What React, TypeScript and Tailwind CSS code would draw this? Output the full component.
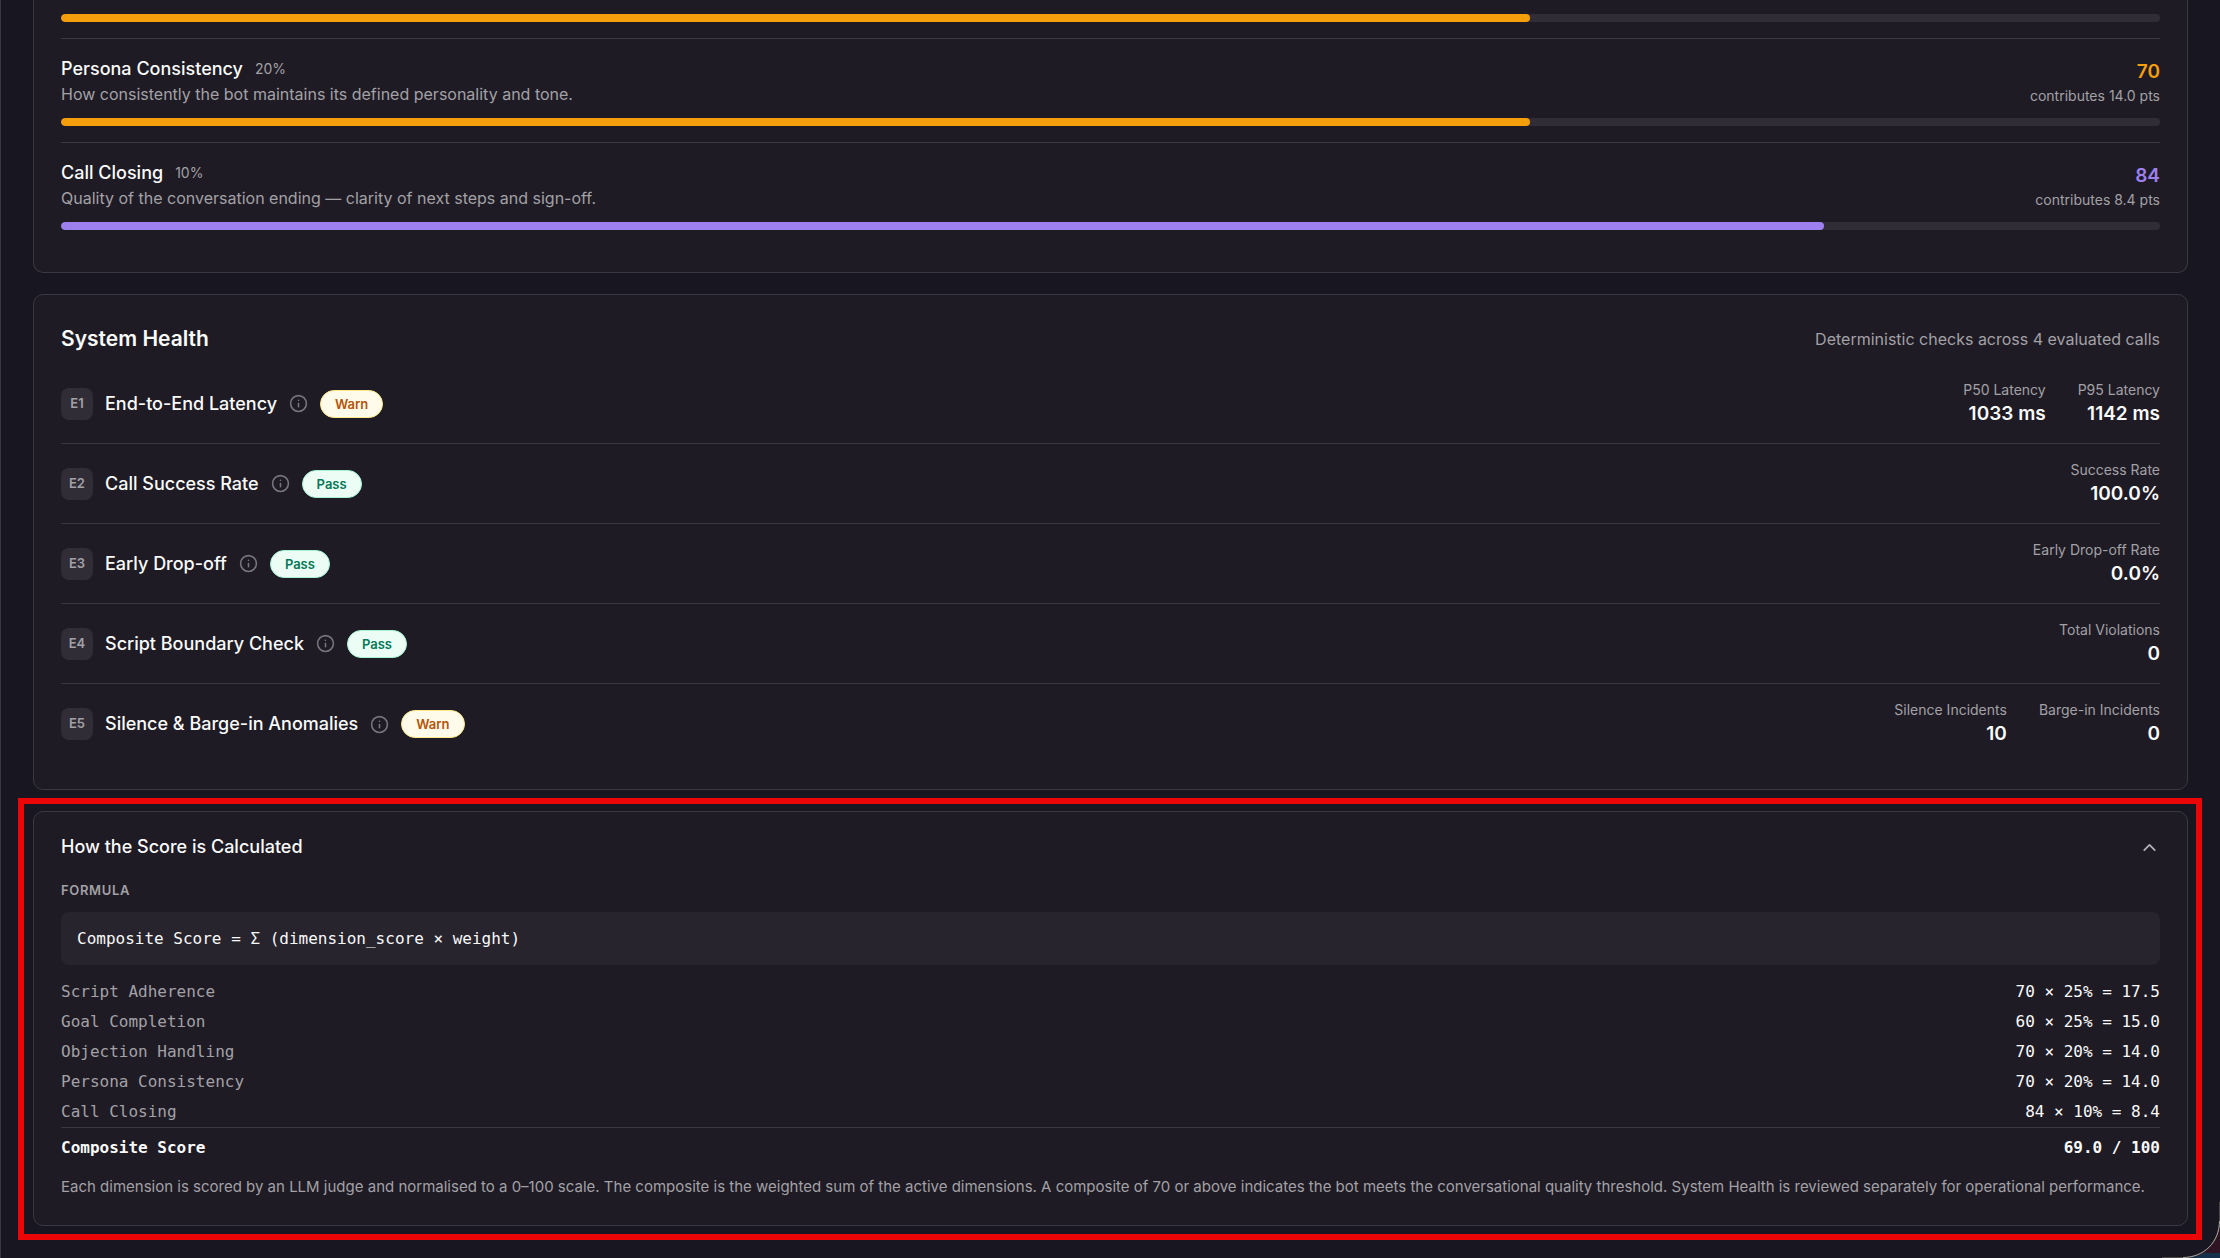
import React from "react";
import { ChevronUp, Info } from "lucide-react";
import clsx from "clsx";

interface Dimension {
  title: string;
  weight: string;
  description: string;
  score: number;
  points: string;
}

interface Check {
  id: string;
  title: string;
  status: "Warn" | "Pass";
  metrics: { label: string; value: string }[];
}

const dimensions: Dimension[] = [
  {
    title: "Persona Consistency",
    weight: "20%",
    description:
      "How consistently the bot maintains its defined personality and tone.",
    score: 70,
    points: "14.0",
  },
  {
    title: "Call Closing",
    weight: "10%",
    description:
      "Quality of the conversation ending — clarity of next steps and sign-off.",
    score: 84,
    points: "8.4",
  },
];

const checks: Check[] = [
  {
    id: "E1",
    title: "End-to-End Latency",
    status: "Warn",
    metrics: [
      { label: "P50 Latency", value: "1033 ms" },
      { label: "P95 Latency", value: "1142 ms" },
    ],
  },
  {
    id: "E2",
    title: "Call Success Rate",
    status: "Pass",
    metrics: [{ label: "Success Rate", value: "100.0%" }],
  },
  {
    id: "E3",
    title: "Early Drop-off",
    status: "Pass",
    metrics: [{ label: "Early Drop-off Rate", value: "0.0%" }],
  },
  {
    id: "E4",
    title: "Script Boundary Check",
    status: "Pass",
    metrics: [{ label: "Total Violations", value: "0" }],
  },
  {
    id: "E5",
    title: "Silence & Barge-in Anomalies",
    status: "Warn",
    metrics: [
      { label: "Silence Incidents", value: "10" },
      { label: "Barge-in Incidents", value: "0" },
    ],
  },
];

const breakdown = [
  { name: "Script Adherence", value: "70 × 25% = 17.5" },
  { name: "Goal Completion", value: "60 × 25% = 15.0" },
  { name: "Objection Handling", value: "70 × 20% = 14.0" },
  { name: "Persona Consistency", value: "70 × 20% = 14.0" },
  { name: "Call Closing", value: "84 × 10% = 8.4" },
];

const ScoreBar = ({ score }: { score: number }) => (
  <div className="h-2 overflow-hidden rounded-full bg-[#302d37]">
    <div
      className={clsx(
        "h-full rounded-full",
        score >= 80 ? "bg-[#9d80ee]" : "bg-[#f59e0b]"
      )}
      style={{ width: `${score}%` }}
    />
  </div>
);

const DimensionRow = ({ dimension }: { dimension: Dimension }) => {
  const { title, weight, description, score, points } = dimension;

  return (
    <div className="border-t border-[#3a3842] pt-4 pb-4">
      <div className="flex items-end justify-between pb-3">
        <div>
          <div className="flex items-center gap-3">
            <h3 className="text-lg leading-7 font-medium text-[#fafafa]">
              {title}
            </h3>
            <span className="text-sm leading-6 text-[#a3a1a6]">{weight}</span>
          </div>
          <p className="text-base leading-[23px] text-[#a3a1a6]">
            {description}
          </p>
        </div>
        <div className="text-right">
          <p
            className={clsx(
              "text-[19px] leading-7 font-semibold",
              score >= 80 ? "text-[#9d80ee]" : "text-[#f59e0b]"
            )}
          >
            {score}
          </p>
          <p className="text-sm leading-5 text-[#a3a1a6]">
            contributes {points} pts
          </p>
        </div>
      </div>
      <ScoreBar score={score} />
    </div>
  );
};

const StatusBadge = ({ status }: { status: Check["status"] }) => (
  <span
    className={clsx(
      "rounded-full border px-3.5 text-[13px] leading-[26px] font-semibold",
      status === "Warn"
        ? "border-[#fde68a] bg-[#fffbeb] text-[#b45309]"
        : "border-[#a7f3d0] bg-[#ecfdf5] text-[#047857]"
    )}
  >
    {status}
  </span>
);

const CheckRow = ({ check }: { check: Check }) => (
  <li className="flex h-20 items-center justify-between border-b border-[#3a3842] last:border-b-0">
    <div className="flex items-center gap-3">
      <span className="flex size-8 items-center justify-center rounded-lg bg-[#302d37] text-[13px] font-semibold text-[#a3a1a6]">
        {check.id}
      </span>
      <h3 className="text-lg leading-7 font-medium text-[#fafafa]">
        {check.title}
      </h3>
      <button type="button" aria-label={`About ${check.title}`}>
        <Info className="size-[19px] text-[#77757c]" strokeWidth={2} />
      </button>
      <StatusBadge status={check.status} />
    </div>
    <div className="flex gap-8 text-right">
      {check.metrics.map((metric) => (
        <div key={metric.label}>
          <p className="text-sm leading-5 text-[#a3a1a6]">{metric.label}</p>
          <p className="text-[19px] leading-7 font-semibold text-[#fafafa]">
            {metric.value}
          </p>
        </div>
      ))}
    </div>
  </li>
);

// rounded window edge with the desktop showing behind it
const WindowCorner = () => (
  <svg
    className="pointer-events-none absolute right-0 bottom-0 size-16"
    viewBox="0 0 64 64"
    fill="none"
    aria-hidden="true"
  >
    <path d="M64 27C64 48 49 63 28 63.5V64H64Z" fill="#2f1424" />
    <path d="M64 59H48C43 62 36 63.5 28 63.5V64H64Z" fill="#14304a" />
    <path
      d="M63.5 8V27C63.5 48 48 63.5 27 63.5H6"
      stroke="#4a4844"
      strokeWidth="1"
    />
    <path
      d="M63.5 27C63.5 48 48 63.5 27 63.5"
      stroke="#a5a39c"
      strokeWidth="1"
    />
  </svg>
);

const App = () => {
  return (
    <main className="relative min-h-screen border-l border-[#3a3842] bg-[#181620] px-8 pb-6 font-['Inter',sans-serif]">
      <section className="rounded-b-[10px] border border-t-0 border-[#3a3842] bg-[#1e1b24] px-[27px] pt-3.5 pb-[26px]">
        <div className="pb-4">
          <ScoreBar score={70} />
        </div>
        {dimensions.map((dimension) => (
          <DimensionRow key={dimension.title} dimension={dimension} />
        ))}
      </section>

      <section className="mt-[21px] rounded-[10px] border border-[#3a3842] bg-[#1e1b24] px-[27px] pt-7 pb-[25px]">
        <div className="flex items-center justify-between">
          <h2 className="text-[21px] leading-8 font-semibold text-[#fafafa]">
            System Health
          </h2>
          <p className="text-base leading-6 text-[#a3a1a6]">
            Deterministic checks across 4 evaluated calls
          </p>
        </div>
        <ul className="pt-[9px]">
          {checks.map((check) => (
            <CheckRow key={check.id} check={check} />
          ))}
        </ul>
      </section>

      <div className="relative mt-[21px]">
        <div className="pointer-events-none absolute -top-[13px] -right-[14px] -bottom-[14px] -left-[15px] border-[6px] border-[#ea0606]" />
        <section className="rounded-[10px] border border-[#3a3842] bg-[#1e1b24] px-[27px] pt-[21px] pb-[26px]">
          <button
            type="button"
            aria-expanded="true"
            className="flex w-full items-center justify-between"
          >
            <span className="text-lg leading-7 font-medium text-[#fafafa]">
              How the Score is Calculated
            </span>
            <ChevronUp className="size-[21px] text-[#b5b3b8]" />
          </button>
          <h3 className="pt-[19px] text-[13px] leading-5 font-semibold tracking-wider text-[#a3a1a6] uppercase">
            Formula
          </h3>
          <div className="mt-3 rounded-lg bg-[#27242d] p-4 font-['DejaVu_Sans_Mono',monospace] text-base leading-[21px] text-[#fafafa]">
            Composite Score = Σ (dimension_score × weight)
          </div>
          <table className="mt-3 w-full font-['DejaVu_Sans_Mono',monospace] text-base">
            <tbody>
              {breakdown.map((row) => (
                <tr key={row.name} className="h-[30px]">
                  <th className="text-left font-normal text-[#a3a1a6]">
                    {row.name}
                  </th>
                  <td className="text-right text-[#fafafa]">{row.value}</td>
                </tr>
              ))}
            </tbody>
            <tfoot>
              <tr className="h-[42px] border-t border-[#3a3842] font-bold text-[#fafafa]">
                <th className="text-left">Composite Score</th>
                <td className="text-right">69.0 / 100</td>
              </tr>
            </tfoot>
          </table>
          <p className="pt-1.5 text-[15px] leading-6 text-[#a3a1a6]">
            Each dimension is scored by an LLM judge and normalised to a 0–100
            scale. The composite is the weighted sum of the active dimensions. A
            composite of 70 or above indicates the bot meets the conversational
            quality threshold. System Health is reviewed separately for
            operational performance.
          </p>
        </section>
      </div>
      <WindowCorner />
    </main>
  );
};

export default App;
